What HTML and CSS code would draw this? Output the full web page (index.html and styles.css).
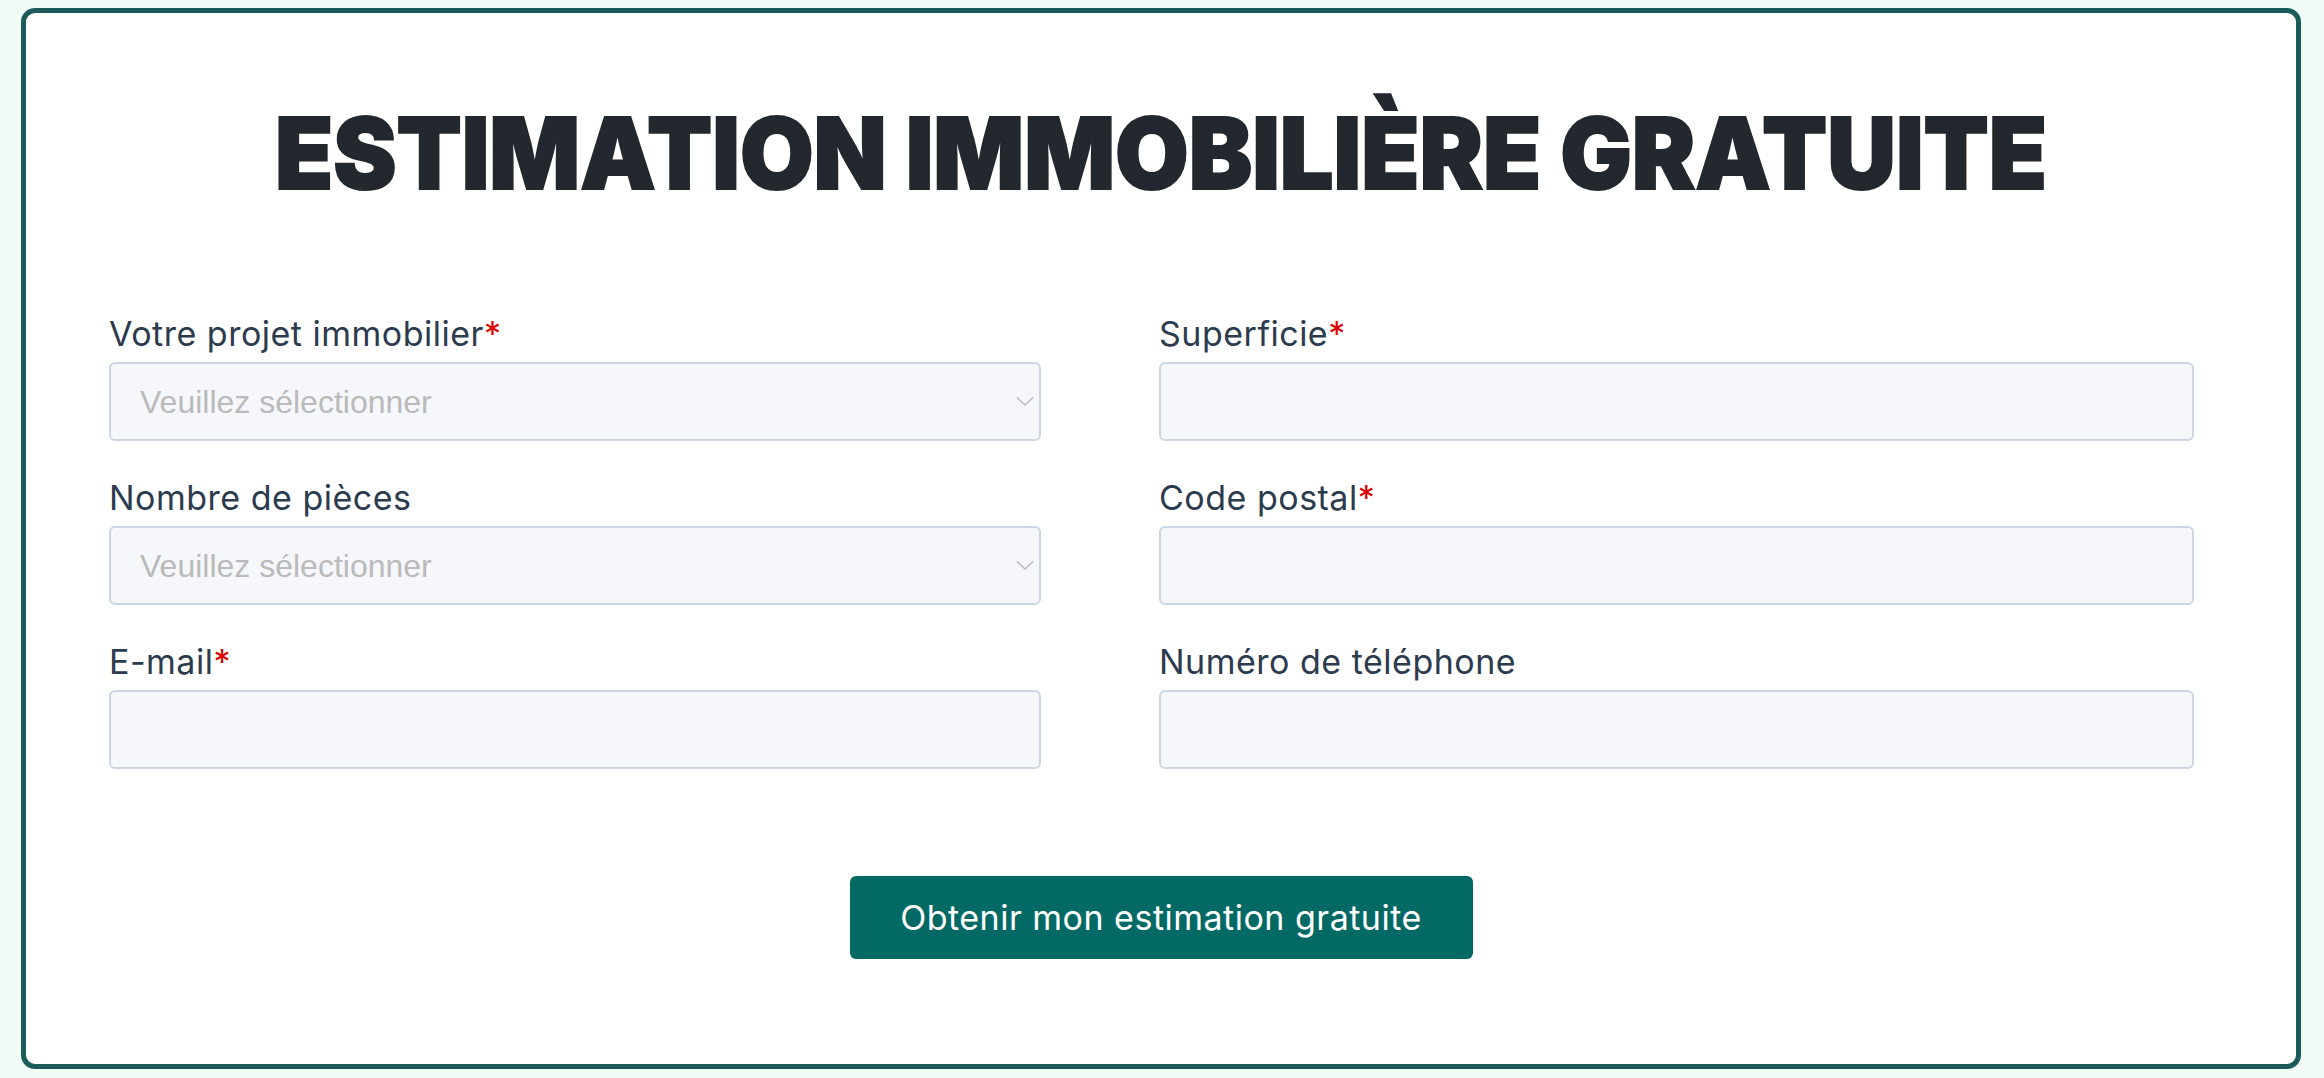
FILE: index.html
```html
<!DOCTYPE html>
<html lang="fr">
<head>
  <meta charset="UTF-8" />
  <meta name="viewport" content="width=device-width, initial-scale=1.0" />
  <title>Estimation immobilière gratuite</title>
  <link rel="stylesheet" href="styles.css">
</head>
<body>
  <div class="estimate-card">
    <h1 class="estimate-title">ESTIMATION IMMOBILIÈRE GRATUITE</h1>

    <form class="estimate-form">
      <div class="fields">
        <div class="field">
          <label for="projet">Votre projet immobilier<span class="req">*</span></label>
          <div class="select-wrap">
            <select id="projet">
              <option>Veuillez sélectionner</option>
            </select>
            <svg class="chevron" width="18" height="11" viewBox="0 0 18 11"><path d="M1 1.5 L9 9 L17 1.5" fill="none" stroke="#bcbcbc" stroke-width="1.6"/></svg>
          </div>
        </div>
        <div class="field">
          <label for="superficie">Superficie<span class="req">*</span></label>
          <input type="text" id="superficie">
        </div>

        <div class="field">
          <label for="pieces">Nombre de pièces</label>
          <div class="select-wrap">
            <select id="pieces">
              <option>Veuillez sélectionner</option>
            </select>
            <svg class="chevron" width="18" height="11" viewBox="0 0 18 11"><path d="M1 1.5 L9 9 L17 1.5" fill="none" stroke="#bcbcbc" stroke-width="1.6"/></svg>
          </div>
        </div>
        <div class="field">
          <label for="cp">Code postal<span class="req">*</span></label>
          <input type="text" id="cp">
        </div>

        <div class="field">
          <label for="email">E-mail<span class="req">*</span></label>
          <input type="email" id="email">
        </div>
        <div class="field">
          <label for="tel">Numéro de téléphone</label>
          <input type="tel" id="tel">
        </div>
      </div>

      <div class="actions">
        <button type="submit" class="submit-btn">Obtenir mon estimation gratuite</button>
      </div>
    </form>
  </div>
</body>
</html>
```

FILE: styles.css
```css
* {
  box-sizing: border-box;
}
body {
  margin: 0;
  padding: 8px 23px 9px 21px;
  background-color: #f1fcf7;
  font-family: Inter, "Noto Sans", sans-serif;
}
.estimate-card {
  height: 1061px;
  background: #fff;
  border: 5px solid #1b5b59;
  border-radius: 14px;
  padding: 91px 101px 0 83px;
}
.estimate-title {
  margin: 0 -101px 109px -83px;
  font-size: 99px;
  line-height: 1;
  font-weight: 900;
  color: #23282e;
  -webkit-text-stroke: 2px #23282e;
  text-align: center;
  white-space: nowrap;
  transform: scaleX(0.96);
}
.fields {
  display: grid;
  grid-template-columns: 932px 1035px;
  column-gap: 118px;
  row-gap: 35px;
}
.field label {
  display: block;
  font-size: 34px;
  line-height: 44px;
  letter-spacing: 0.5px;
  color: #2c3b4e;
  margin-bottom: 6px;
}
.req {
  color: #e00000;
}
.field input,
.field select {
  display: block;
  width: 100%;
  height: 79px;
  background: #f5f7fa;
  border: 2px solid #cbd6e2;
  border-radius: 6px;
  padding: 0 29px;
  font-family: "Liberation Sans", Arial, sans-serif;
  font-size: 32px;
  color: #bababa;
  outline: none;
}
.field select {
  appearance: none;
  -webkit-appearance: none;
}
.select-wrap {
  position: relative;
}
.chevron {
  position: absolute;
  right: 7px;
  top: 34px;
  pointer-events: none;
}
.actions {
  display: flex;
  justify-content: center;
  margin: 107px -101px 0 -83px;
}
.submit-btn {
  height: 83px;
  width: 623px;
  padding: 0;
  border: none;
  border-radius: 6px;
  background-color: #026964;
  color: #fff;
  font-family: Inter, "Noto Sans", sans-serif;
  font-size: 34px;
  letter-spacing: 0.5px;
  white-space: nowrap;
  cursor: pointer;
}
```
